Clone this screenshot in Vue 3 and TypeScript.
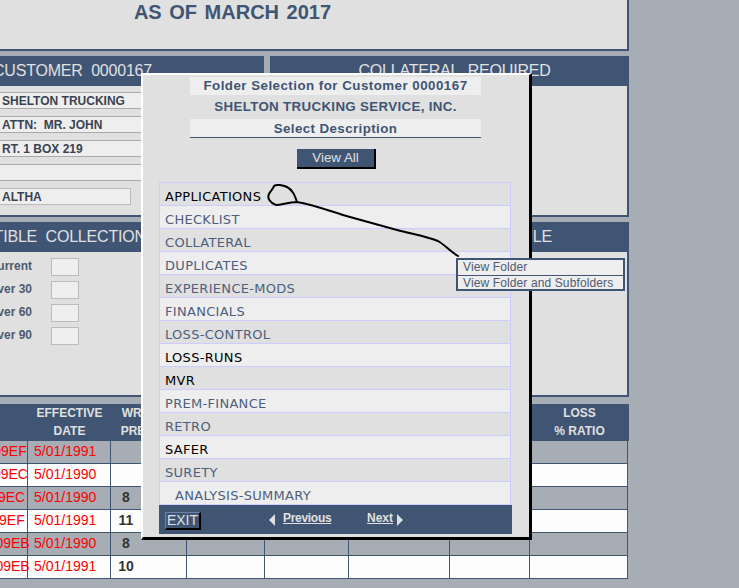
<script setup lang="ts">
const addressLines = ['SHELTON TRUCKING', 'ATTN:\u00a0 MR. JOHN', 'RT. 1 BOX 219', '']
const agingLabels = ['Current', 'Over 30', 'Over 60', 'Over 90']
const folders = [
  { name: 'APPLICATIONS', filled: true, child: false },
  { name: 'CHECKLIST', filled: false, child: false },
  { name: 'COLLATERAL', filled: false, child: false },
  { name: 'DUPLICATES', filled: false, child: false },
  { name: 'EXPERIENCE-MODS', filled: false, child: false },
  { name: 'FINANCIALS', filled: false, child: false },
  { name: 'LOSS-CONTROL', filled: false, child: false },
  { name: 'LOSS-RUNS', filled: true, child: false },
  { name: 'MVR', filled: true, child: false },
  { name: 'PREM-FINANCE', filled: false, child: false },
  { name: 'RETRO', filled: false, child: false },
  { name: 'SAFER', filled: true, child: false },
  { name: 'SURETY', filled: false, child: false },
  { name: 'ANALYSIS-SUMMARY', filled: false, child: true },
]
const policies = [
  { policy: 'WC0000109EF', shift: 2, date: '5/01/1991', premium: '' },
  { policy: 'WC0000109EC', shift: 1.7, date: '5/01/1990', premium: '' },
  { policy: 'WC0000109EC', shift: -1.1, date: '5/01/1990', premium: '8' },
  { policy: 'WC0000109EF', shift: 0, date: '5/01/1991', premium: '11' },
  { policy: 'WC0000109EB', shift: 4.2, date: '5/01/1990', premium: '8' },
  { policy: 'WC0000109EB', shift: 4.2, date: '5/01/1991', premium: '10' },
]
const headers = [
  ['POLICY', 'NUMBER'],
  ['EFFECTIVE', 'DATE'],
  ['WRITTEN', 'PREMIUM'],
  ['EARNED', 'PREMIUM'],
  ['INCURRED', 'LOSSES'],
  ['PAID', 'LOSSES'],
  ['OPEN', 'RESERVES'],
  ['LOSS', '% RATIO'],
]
</script>

<template>
  <div class="page">
    <div class="sheet">
      <section class="title-panel">
        <h1>AS OF MARCH 2017</h1>
      </section>

      <div class="pair">
        <section class="panel">
          <h2 class="head head-customer">CUSTOMER&nbsp; 0000167</h2>
          <div class="body address">
            <div v-for="(line, i) in addressLines" :key="i" class="field">{{ line }}</div>
            <div class="field short">ALTHA</div>
          </div>
        </section>
        <section class="panel">
          <h2 class="head head-right">COLLATERAL&nbsp; REQUIRED</h2>
          <div class="body"></div>
        </section>
      </div>

      <div class="pair second">
        <section class="panel">
          <h2 class="head head-collect">DEDUCTIBLE&nbsp; COLLECTIONS</h2>
          <div class="body aging">
            <template v-for="label in agingLabels" :key="label">
              <span class="aging-label">{{ label }}</span>
              <span class="aging-box"></span>
            </template>
          </div>
        </section>
        <section class="panel">
          <h2 class="head head-right">COLLATERAL&nbsp; SCHEDULE</h2>
          <div class="body"></div>
        </section>
      </div>

      <div class="table">
        <div class="thead">
          <div v-for="h in headers" :key="h[0]" class="th">{{ h[0] }}<br />{{ h[1] }}</div>
        </div>
        <div v-for="(row, i) in policies" :key="i" class="tr" :class="{ alt: i % 2 === 0 }">
          <div class="td policy"><span :style="{ marginLeft: row.shift + 'px' }">{{ row.policy }}</span></div>
          <div class="td date">{{ row.date }}</div>
          <div class="td premium">{{ row.premium }}</div>
          <div class="td"></div>
          <div class="td"></div>
          <div class="td"></div>
          <div class="td"></div>
          <div class="td"></div>
        </div>
      </div>
    </div>

    <div class="modal">
      <div class="m-line m-strip m-title">Folder Selection for Customer 0000167</div>
      <div class="m-line m-name">SHELTON TRUCKING SERVICE, INC.</div>
      <div class="m-line m-strip m-select">Select Description</div>
      <button class="view-all" type="button">View All</button>
      <ul class="folders">
        <li
          v-for="(f, i) in folders"
          :key="f.name"
          :class="{ odd: i % 2 === 1, filled: f.filled, child: f.child }"
        >{{ f.name }}</li>
      </ul>
      <div class="m-foot">
        <button class="exit" type="button">EXIT</button>
        <span class="tri tri-left"></span>
        <a class="pager prev">Previous</a>
        <a class="pager next">Next</a>
        <span class="tri tri-right"></span>
      </div>
    </div>

    <svg class="scribble" width="739" height="588" viewBox="0 0 739 588" fill="none">
      <path
        d="M297 202 C 295 196 293 190 287 187 C 283 185 276 184 274 186 C 273 189 271 190 269 194 C 267 198 270 203 276 205 C 282 205 288 202 297 202 C 315 205 332 212 350 217 C 365 221 382 226 397 230 C 412 234 425 236 438 241 C 445 245 451 252 458 256"
        stroke="#000"
        stroke-width="2"
        stroke-linecap="round"
        stroke-linejoin="round"
      />
    </svg>

    <div class="menu">
      <div class="menu-item">View Folder</div>
      <div class="menu-item">View Folder and Subfolders</div>
    </div>
  </div>
</template>

<style scoped>
.page {
  position: relative;
  width: 739px;
  height: 588px;
  overflow: hidden;
  background: #a7adb5;
  font-family: "Liberation Sans", Arial, sans-serif;
  color: #3f5573;
}
.sheet {
  margin-left: -112px;
  width: 741px;
  display: flex;
  flex-direction: column;
}
.title-panel {
  height: 51px;
  box-sizing: border-box;
  background: #e0e0e0;
  border: 2px solid #3f5573;
  border-top: 0;
  padding-right: 52px;
  text-align: center;
}
h1 {
  margin: 0;
  font-size: 20px;
  line-height: 24px;
  word-spacing: 2px;
  font-weight: bold;
}
.pair {
  margin-top: 5px;
  display: grid;
  grid-template-columns: 376px 359px;
  gap: 6px;
  height: 161px;
}
.second {
  height: 175px;
}
.panel {
  display: flex;
  flex-direction: column;
  min-width: 0;
}
.head {
  margin: 0;
  height: 30px;
  flex: none;
  background: #3f5573;
  color: #e0e0e0;
  font-size: 16px;
  font-weight: normal;
  letter-spacing: -0.2px;
  line-height: 30px;
  text-align: center;
  white-space: nowrap;
  overflow: hidden;
}
.head-customer {
  padding-right: 7px;
}
.head-right {
  padding-left: 10px;
}
.head-collect {
  padding-right: 58px;
}
.body {
  flex: 1;
  background: #e0e0e0;
  border: 2px solid #3f5573;
  border-top: 0;
}
.address {
  display: flex;
  flex-direction: column;
  gap: 7px;
  padding: 6px 0 0 110px;
}
.field {
  box-sizing: border-box;
  height: 17px;
  background: #eee;
  border-top: 1px solid #aaa;
  border-bottom: 1px solid #aaa;
  color: #3b4352;
  font-size: 12px;
  font-weight: bold;
  line-height: 16px;
  white-space: nowrap;
  padding-left: 2px;
}
.field.short {
  width: 131px;
  border: 1px solid #bbb;
  border-left: 0;
}
.aging {
  display: grid;
  grid-template-columns: 142px 28px;
  grid-auto-rows: 18px;
  row-gap: 5px;
  column-gap: 19px;
  align-content: start;
  padding-top: 6px;
}
.aging-label {
  text-align: right;
  font-size: 12px;
  font-weight: bold;
  line-height: 16px;
  color: #4d5a6e;
}
.aging-box {
  box-sizing: border-box;
  background: #eee;
  border: 1px solid #bbb;
}
.table {
  margin-top: 7px;
  width: 741px;
}
.thead {
  display: grid;
  grid-template-columns: 140px 83px 76px 78px 84px 101px 80px 99px;
  height: 37px;
  background: #3f5573;
}
.th {
  color: #e0e0e0;
  font-size: 12px;
  font-weight: bold;
  line-height: 18px;
  text-align: center;
  white-space: nowrap;
}
.tr {
  display: grid;
  grid-template-columns: 140px 83px 76px 78px 84px 101px 80px 98px;
  height: 23px;
  background: #fdfdfd;
  width: 740px;
}
.tr.alt {
  background: #a7adb5;
}
.td {
  box-sizing: border-box;
  border-right: 1px solid #3f5573;
  border-bottom: 1px solid #3f5573;
  font-size: 14px;
  line-height: 21px;
  white-space: nowrap;
}
.policy {
  color: #f00;
  padding-left: 41px;
}
.date {
  color: #f00;
  padding-left: 6px;
}
.premium {
  color: #333;
  font-weight: bold;
  text-align: center;
  padding-right: 45px;
}
.modal {
  position: absolute;
  left: 141px;
  top: 73px;
  width: 391px;
  height: 467px;
  box-sizing: border-box;
  background: #e0e0e0;
  border-style: solid;
  border-color: #fff #000 #000 #fff;
  border-width: 2px 3px 3px 2px;
  padding-top: 2px;
  display: flex;
  flex-direction: column;
  align-items: flex-start;
}
.m-line {
  margin-left: 47px;
  width: 291px;
  box-sizing: border-box;
  text-align: center;
  font-weight: bold;
  font-size: 13.33px;
  letter-spacing: 0.4px;
  white-space: nowrap;
}
.m-strip {
  height: 18px;
  line-height: 18px;
  background: #eee;
}
.m-title {
  letter-spacing: 0.47px;
}
.m-name {
  height: 24px;
  line-height: 24px;
  letter-spacing: 0.33px;
}
.m-select {
  height: 19px;
  line-height: 19px;
  border-bottom: 1px solid #3f5573;
}
.view-all {
  margin: 11px 0 0 154px;
  width: 79px;
  height: 20px;
  box-sizing: border-box;
  background: #3f5573;
  color: #e0e0e0;
  border: 0;
  border-right: 2px solid #000;
  border-bottom: 2px solid #000;
  padding: 0;
  font-family: inherit;
  font-size: 13.33px;
  line-height: 18px;
}
.folders {
  list-style: none;
  margin: 13px 0 0 16px;
  padding: 0;
  width: 352px;
  box-sizing: border-box;
  border: 1px solid #ccf;
  border-bottom: 0;
}
.folders li {
  box-sizing: border-box;
  height: 23px;
  background: #e0e0e0;
  border-bottom: 1px solid #ccf;
  padding: 4px 0 0 5px;
  color: #4d5f7d;
  font-family: "DejaVu Sans", Verdana, sans-serif;
  font-size: 13px;
  letter-spacing: 0.3px;
  line-height: 20px;
  white-space: nowrap;
}
.folders li.odd {
  background: #eee;
}
.folders li.filled {
  color: #000;
}
.folders li.child {
  padding-left: 15px;
}
.m-foot {
  margin-left: 16px;
  width: 353px;
  height: 29px;
  background: #3f5573;
  color: #e0e0e0;
  display: flex;
  align-items: center;
  flex: none;
}
.exit {
  margin: 3px 0 0 6px;
  width: 36px;
  height: 18px;
  box-sizing: border-box;
  background: #3f5573;
  color: #e0e0e0;
  border-style: solid;
  border-color: #6a82a8 #000 #000 #6a82a8;
  border-width: 1px 2px 2px 1px;
  padding: 0;
  font-family: inherit;
  font-size: 14px;
  line-height: 15px;
}
.tri {
  width: 0;
  height: 0;
  border-top: 6px solid transparent;
  border-bottom: 6px solid transparent;
}
.tri-left {
  margin-left: 68px;
  border-right: 6px solid #e0e0e0;
}
.tri-right {
  margin-left: 4px;
  border-left: 6px solid #e0e0e0;
}
.pager {
  font-size: 12px;
  font-weight: bold;
  text-decoration: underline;
  margin-top: -3px;
}
.prev {
  margin-left: 8px;
  width: 48px;
  letter-spacing: -0.3px;
}
.next {
  margin-left: 36px;
}
.scribble {
  position: absolute;
  left: 0;
  top: 0;
  pointer-events: none;
}
.menu {
  position: absolute;
  left: 456px;
  top: 258px;
  width: 169px;
  height: 33px;
  box-sizing: border-box;
  border: 2px solid #3f5573;
  background: #eee;
}
.menu-item {
  height: 15px;
  padding-left: 5px;
  font-size: 12px;
  line-height: 15px;
  color: #4d5a72;
  letter-spacing: 0.12px;
  white-space: nowrap;
}
.menu-item + .menu-item {
  border-top: 1px solid #3f5573;
}
</style>
